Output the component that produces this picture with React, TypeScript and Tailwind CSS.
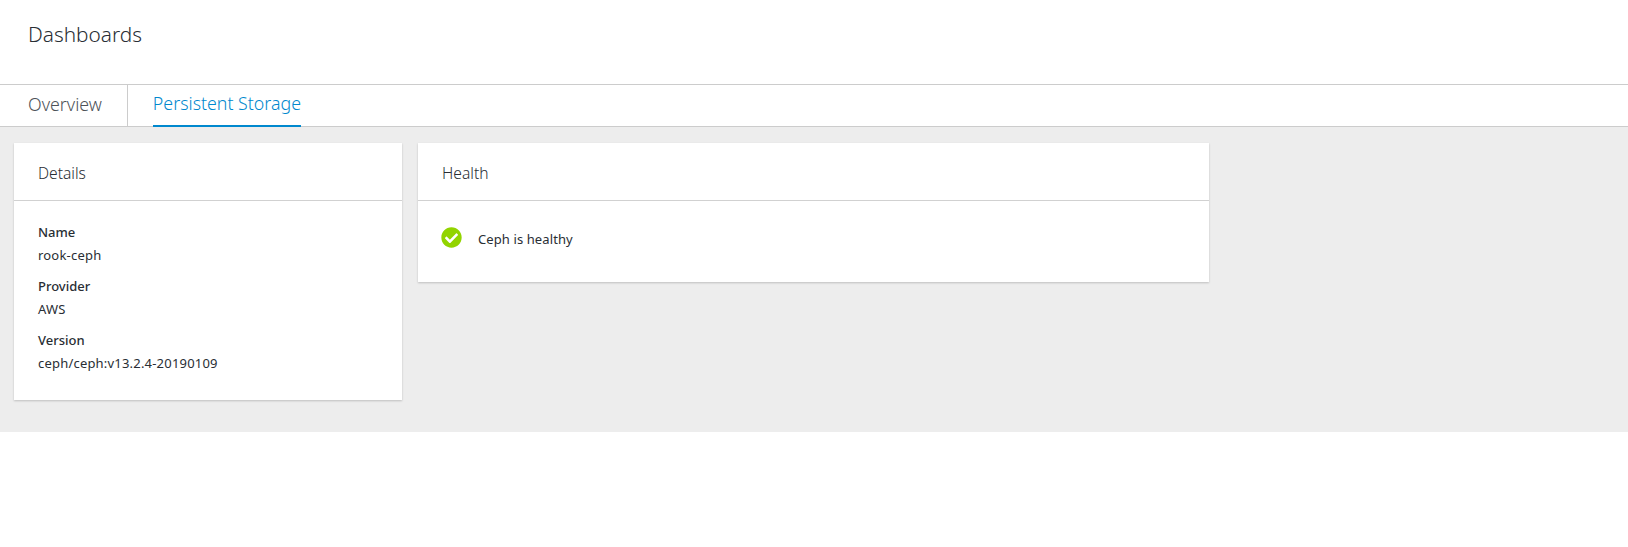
import { FaCheckCircle } from 'react-icons/fa'

const details = [
  { label: 'Name', value: 'rook-ceph' },
  { label: 'Provider', value: 'AWS' },
  { label: 'Version', value: 'ceph/ceph:v13.2.4-20190109' },
]

function CardHeader({ title }: { title: string }) {
  return (
    <div className="h-[58px] flex items-center px-6 pt-[4px] border-b border-[#d1d1d1] text-[15.6px] font-light text-[#292e34]">
      {title}
    </div>
  )
}

export default function App() {
  return (
    <div className="min-h-[547px] bg-white font-['Noto_Sans',sans-serif] text-[#292e34]">
      <div className="h-[85px] border-b border-[#cccccc] px-7 pt-[18px]">
        <h1 className="text-[20.8px] leading-[32px] font-light">Dashboards</h1>
      </div>

      {/* Tabs */}
      <div className="h-[42px] flex items-start border-b border-[#cccccc] text-[17.8px] font-light">
        <div className="h-full flex items-center pl-7 pr-[25px] pb-[3px] border-r border-[#cccccc] text-[#4d5258]">Overview</div>
        <div className="ml-[25px] h-[42px] w-[148px] whitespace-nowrap flex items-center pb-[4px] border-b-[2px] border-[#0088ce] text-[#0088ce]">
          Persistent Storage
        </div>
      </div>

      {/* Cards */}
      <div className="h-[305px] bg-[#ededed] px-[14px] pt-4 flex items-start gap-4">
        <div className="w-[388px] h-[257px] bg-white shadow-[0_1px_2px_rgba(3,3,3,0.2)]">
          <CardHeader title="Details" />
          <div className="px-6 pt-5">
            {details.map((d) => (
              <div key={d.label} className="mb-[8px]">
                <div className="text-[13px] leading-[23px] font-medium">{d.label}</div>
                <div className="text-[13px] leading-[23px] tracking-[0.2px]">{d.value}</div>
              </div>
            ))}
          </div>
        </div>
        <div className="w-[791px] h-[139px] bg-white shadow-[0_1px_2px_rgba(3,3,3,0.2)]">
          <CardHeader title="Health" />
          <div className="pl-[23px] pt-[26px] flex items-start">
            <FaCheckCircle className="text-[#92d400] text-[21px]" />
            <span className="ml-4 mt-[2px] text-[13px] leading-[21px] tracking-[0.1px]">Ceph is healthy</span>
          </div>
        </div>
      </div>
    </div>
  )
}
